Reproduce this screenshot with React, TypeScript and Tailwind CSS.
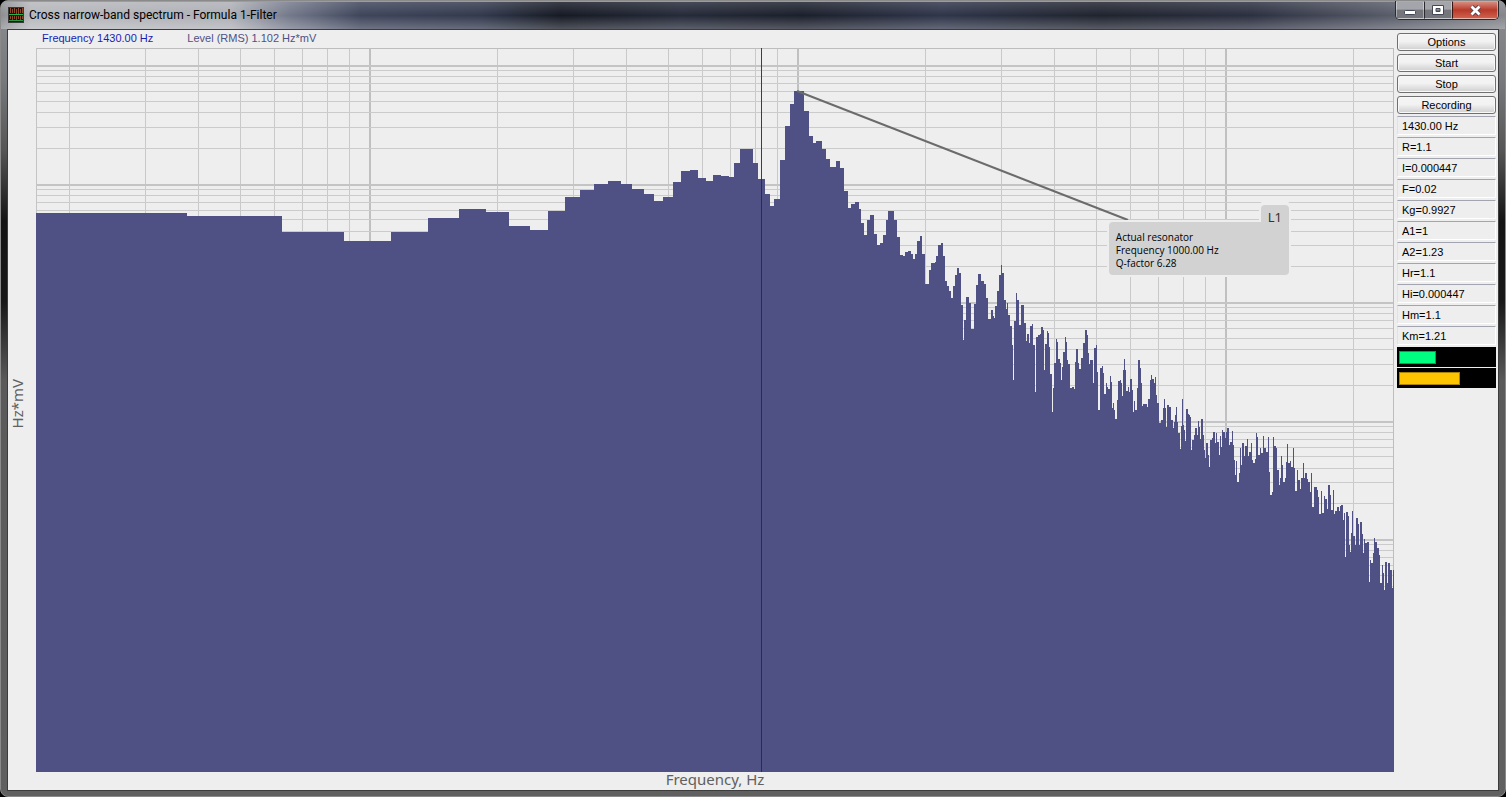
import React from "react";

const PLOT = { left: 36, top: 48, right: 1394, bottom: 772 };
const DECADE_X = 428;
const DECADE_Y = 118.5;

// start and level of every band
const bands = [
  36,213, 187,216, 282,232, 344,241, 391,232, 428,218, 459,209, 486,212, 509,226, 530,230,
  548,211, 565,197, 580,190, 594,184, 608,181, 621,184, 632,189, 644,194, 654,201, 663,197,
  673,182, 681,171, 690,170, 698,178, 706,181, 713,175, 721,176, 729,177, 734,163, 740,149,
  753,163, 758,179, 765,194, 770,206, 774,199, 780,160, 785,126, 790,104, 794,91, 804,111,
  809,136, 813,143, 816,141, 822,149, 826,159, 830,167, 836,161, 840,168, 844,191, 848,208,
  851,204, 855,202, 859,209, 861,223, 864,235, 867,220, 870,215, 874,234, 877,245, 880,243,
  883,235, 886,220, 888,211, 894,220, 897,237, 900,255, 903,256, 905,252, 908,251, 911,254,
  913,259, 915,254, 917,241, 920,236, 922,254, 925,284, 929,270, 931,263, 935,262, 936,256,
  938,245, 941,243, 943,256, 945,281, 947,286, 949,291, 951,298, 953,286, 955,275, 957,268,
  959,273, 961,305, 963,340, 964,320, 966,297, 969,303, 971,329, 974,304, 976,285, 978,274,
  981,281, 984,284, 986,298, 988,319, 991,310, 993,316, 994,318, 995,306, 997,291, 999,275,
  1001,265, 1002,273, 1004,300, 1006,309, 1007,303, 1008,315, 1010,326, 1012,345, 1013,380,
  1014,321, 1016,293, 1017,300, 1019,325, 1021,305, 1024,323, 1026,341, 1027,334, 1029,343,
  1030,326, 1032,324, 1033,345, 1035,392, 1036,337, 1038,335, 1040,334, 1041,327, 1043,330,
  1044,370, 1045,344, 1047,331, 1048,333, 1049,347, 1050,374, 1052,412, 1053,388, 1054,363,
  1056,339, 1057,342, 1058,359, 1060,363, 1061,380, 1062,367, 1063,352, 1065,337, 1066,342,
  1067,360, 1068,364, 1070,388, 1072,387, 1074,389, 1075,362, 1076,349, 1078,363, 1079,369,
  1081,358, 1083,343, 1085,330, 1087,335, 1088,353, 1089,364, 1090,360, 1093,383, 1094,348,
  1096,345, 1097,372, 1098,410, 1100,368, 1102,366, 1103,373, 1104,394, 1106,383, 1107,387,
  1108,389, 1110,376, 1111,382, 1112,408, 1113,403, 1114,410, 1115,419, 1117,400, 1118,381,
  1120,380, 1121,383, 1122,396, 1123,370, 1124,359, 1125,370, 1126,391, 1128,387, 1129,392,
  1130,379, 1132,390, 1133,412, 1134,401, 1135,410, 1137,388, 1138,360, 1140,368, 1141,383,
  1142,406, 1143,404, 1147,407, 1148,399, 1150,380, 1151,375, 1152,379, 1154,383, 1155,377,
  1156,395, 1157,403, 1159,423, 1161,420, 1163,408, 1164,399, 1165,408, 1166,427, 1167,405,
  1169,407, 1171,420, 1173,428, 1174,422, 1175,415, 1176,407, 1177,422, 1178,433, 1180,449,
  1181,426, 1182,399, 1183,425, 1184,430, 1185,441, 1186,409, 1188,414, 1189,415, 1190,417,
  1191,450, 1192,440, 1194,435, 1195,428, 1197,435, 1198,421, 1199,427, 1200,439, 1201,419,
  1203,435, 1204,450, 1205,458, 1206,443, 1208,455, 1209,467, 1210,440, 1212,438, 1213,432,
  1215,443, 1216,433, 1217,442, 1219,455, 1220,436, 1221,447, 1222,430, 1223,432, 1225,438,
  1226,432, 1227,428, 1229,445, 1230,442, 1232,431, 1233,445, 1234,460, 1235,475, 1236,461,
  1237,482, 1239,473, 1240,448, 1241,465, 1242,443, 1244,456, 1245,446, 1247,439, 1248,456,
  1249,452, 1251,443, 1252,460, 1253,463, 1255,459, 1256,433, 1257,437, 1258,455, 1260,448,
  1261,453, 1263,436, 1264,448, 1266,452, 1268,437, 1269,472, 1270,495, 1272,492, 1273,437,
  1274,446, 1276,448, 1277,470, 1279,485, 1280,478, 1281,456, 1282,465, 1283,482, 1285,478,
  1286,462, 1287,444, 1288,463, 1290,461, 1291,467, 1293,448, 1294,468, 1295,491, 1297,470,
  1298,480, 1300,489, 1301,478, 1303,463, 1304,478, 1305,473, 1307,479, 1308,482, 1310,492,
  1311,473, 1312,507, 1314,487, 1317,490, 1318,497, 1319,514, 1321,491, 1322,513, 1324,496,
  1325,499, 1327,509, 1328,485, 1330,495, 1331,510, 1333,490, 1334,514, 1335,511, 1337,507,
  1339,511, 1340,506, 1341,505, 1343,520, 1344,513, 1345,557, 1346,512, 1348,516, 1349,545,
  1350,552, 1351,533, 1352,511, 1353,536, 1355,545, 1356,518, 1358,524, 1359,545, 1360,522,
  1362,534, 1363,553, 1364,539, 1365,543, 1367,542, 1369,582, 1370,560, 1371,563, 1373,553,
  1374,538, 1375,542, 1377,548, 1379,555, 1380,583, 1382,565, 1383,573, 1384,590, 1385,562,
  1387,583, 1388,563, 1390,570, 1392,588, 1393,570,
];

const buttons = ["Options", "Start", "Stop", "Recording"];

const readouts = [
  "1430.00 Hz",
  "R=1.1",
  "I=0.000447",
  "F=0.02",
  "Kg=0.9927",
  "A1=1",
  "A2=1.23",
  "Hr=1.1",
  "Hi=0.000447",
  "Hm=1.1",
  "Km=1.21",
];

const meters = [
  { name: "Channel 1", width: "39%", className: "bg-[#00ff80] border-[#00a050]" },
  { name: "Channel 2", width: "64%", className: "bg-[#ffc400] border-[#a88200]" },
];

function spectrumPath() {
  let d = `M${PLOT.left} ${PLOT.bottom}`;
  for (let i = 0; i < bands.length; i += 2) {
    d += `H${bands[i]}V${bands[i + 1]}`;
  }
  return d + `H${PLOT.right}V${PLOT.bottom}Z`;
}

// log grid: a heavier line on each decade, light ones for 2..9
function gridLines() {
  const vertical: { at: number; major: boolean }[] = [];
  const horizontal: { at: number; major: boolean }[] = [];
  for (let decade = -1; decade < 3; decade++) {
    for (let k = 1; k < 10; k++) {
      const at = 368.6 + DECADE_X * (decade + Math.log10(k));
      if (at > PLOT.left && at < PLOT.right) vertical.push({ at: Math.round(at), major: k === 1 });
    }
  }
  for (let decade = 0; decade < 6; decade++) {
    for (let k = 1; k < 10; k++) {
      const at = 65 + DECADE_Y * (decade - Math.log10(k));
      if (at > PLOT.top) horizontal.push({ at: Math.round(at), major: k === 1 });
    }
  }
  return { vertical, horizontal };
}

function Spectrum() {
  const { vertical, horizontal } = gridLines();
  return (
    <svg
      className="absolute inset-0 h-full w-full"
      viewBox="36 48 1358 724"
      preserveAspectRatio="none"
      role="img"
      aria-label="Cross narrow-band spectrum"
    >
      <g shapeRendering="crispEdges">
        {vertical.map((l) => (
          <rect key={l.at} x={l.at} y={PLOT.top} width={l.major ? 2 : 1} height={724} fill={l.major ? "#c0c0c0" : "#c9c9c9"} />
        ))}
        {horizontal.map((l) => (
          <rect key={l.at} x={PLOT.left} y={l.at} width={1358} height={l.major ? 2 : 1} fill={l.major ? "#c4c4c4" : "#cbcbcb"} />
        ))}
        <rect x={36} y={48} width={1358} height={1} fill="#bdbdbd" />
        <rect x={36} y={48} width={1} height={724} fill="#c4c4c4" />
        <rect x={1393} y={48} width={1} height={724} fill="#bdbdbd" />
        <path d={spectrumPath()} fill="#4f5084" />
        <rect x={761} y={48} width={1} height={131} fill="#2a2ad0" />
        <rect x={761} y={179} width={1} height={593} fill="#1c1cc0" />
      </g>
      <path d="M797 91L1128 220" stroke="#6b6b6b" strokeWidth={2} fill="none" />
    </svg>
  );
}

function Callout() {
  return (
    <div className="absolute left-[79%] top-[21.7%] flex w-[180px] flex-col items-end text-black">
      <div className="relative flex h-[17px] w-7 items-start justify-center rounded-t-sm bg-[#d2d2d2] font-['Noto_Sans',sans-serif] text-[13px] leading-6 text-[#333] shadow-[0_-2px_0_2px_#eee]">
        L1
      </div>
      <div className="w-full rounded-sm rounded-tr-none bg-[#d2d2d2] px-[7px] pt-[9px] pb-[5px] font-['Open_Sans',sans-serif] text-[10px] leading-[13px] shadow-[0_0_0_2px_#eee]">
        <p>Actual resonator</p>
        <p>Frequency 1000.00 Hz</p>
        <p>Q-factor 6.28</p>
      </div>
    </div>
  );
}

function AppIcon() {
  return (
    <svg className="h-4 w-4 shrink-0" viewBox="0 0 16 16" aria-hidden="true">
      <rect width="16" height="16" fill="#1a1210" />
      <path
        d="M2.5 1v5M4.5 2v4M6.5 1v5M8.5 2v5M10.5 1v6M12.5 2v4M14.5 1v5M2.5 9v3M4.5 9v5M6.5 9v3M8.5 9v4M10.5 9v3M12.5 9v5M14.5 9v3"
        stroke="#8c4a2c"
      />
      <path d="M0 7.500h16" stroke="#18b850" />
      <path d="M1 13.500h14" stroke="#1d9a45" />
      <rect x=".5" y=".5" width="15" height="15" fill="none" stroke="#3a3a3a" />
    </svg>
  );
}

function TitleBar() {
  return (
    <header className="relative flex h-7 items-start justify-between rounded-t-md bg-[linear-gradient(90deg,#8d8e92_0,#b7b8bc_30px,#aeb0b6_230px,#73788a_290px,#3f465b_360px,#333a4d_480px,#161a24_560px,#262b3a_680px,#1c202c_800px,#30364a_940px,#20242f_1100px,#2c3040_1250px,#555966_1380px,#85878c_100%)] pl-[7px]">
      <div className="pointer-events-none absolute inset-0 rounded-t-md border-t border-[#9a9ca2] bg-linear-to-b from-white/15 via-transparent to-white/25" />
      <div className="relative flex items-center gap-[5px] pt-[6px]">
        <AppIcon />
        <h1 className="whitespace-nowrap font-['Roboto',sans-serif] text-[12px] leading-4 text-black">
          Cross narrow-band spectrum - Formula 1-Filter
        </h1>
      </div>
      <div className="relative mr-[6px] flex h-[19px] overflow-hidden rounded-b-[5px] border border-t-0 border-[#2a2a2e]">
        <button aria-label="Minimize" className="flex w-7 items-end justify-center border border-white/40 bg-linear-to-b from-[#a4a5aa] from-45% to-[#74767c] to-50% pb-[3px]">
          <svg className="h-[5px] w-3" viewBox="0 0 12 5">
            <rect x=".5" y=".5" width="11" height="4" rx="1" fill="#fff" stroke="#444855" />
          </svg>
        </button>
        <button aria-label="Maximize" className="flex w-7 items-center justify-center border border-l-[#2a2a2e] border-white/40 bg-linear-to-b from-[#a4a5aa] from-45% to-[#74767c] to-50%">
          <svg className="h-[10px] w-3" viewBox="0 0 12 10">
            <path d="M.5.5h11v9H.5zM4 3.500h4v3H4z" fill="#fff" fillRule="evenodd" stroke="#444855" />
          </svg>
        </button>
        <button aria-label="Close" className="flex w-[46px] items-center justify-center border border-l-[#3a1612] border-white/40 bg-linear-to-b from-[#d58a7e] from-0% via-[#b8392a] via-50% to-[#d0604c]">
          <svg className="h-[11px] w-[13px]" viewBox="0 0 13 11">
            <path d="M2.500 1.500l8 8M10.500 1.500l-8 8" stroke="#5a3a40" strokeWidth="4.500" />
            <path d="M2.500 1.500l8 8M10.500 1.500l-8 8" stroke="#fff" strokeWidth="2.800" />
          </svg>
        </button>
      </div>
    </header>
  );
}

function SidePanel() {
  return (
    <aside className="mt-[3px] mr-[2px] flex w-[99px] shrink-0 flex-col gap-[2px] font-['Liberation_Sans',Arial,sans-serif] text-[11px] text-black">
      <div className="flex flex-col gap-[3px]">
        {buttons.map((label) => (
          <button
            key={label}
            className="h-[18px] rounded-[3px] border border-[#707070] bg-linear-to-b from-[#f3f3f3] from-45% to-[#cfcfcf] leading-4 shadow-[inset_0_0_0_1px_#f8f8f8]"
          >
            {label}
          </button>
        ))}
      </div>
      {readouts.map((text, i) => (
        <div key={i} className="h-[19px] border border-t-[#a2a4b0] border-r-white border-b-white border-l-[#e2e2e6] pl-1 leading-[19px]">
          {text}
        </div>
      ))}
      {meters.map((m) => (
        <div key={m.name} role="meter" aria-label={m.name} className="h-[19px] bg-black px-[2px] py-1 shadow-[0_1px_0_#000]">
          <div className={`h-[13px] border ${m.className}`} style={{ width: m.width }} />
        </div>
      ))}
    </aside>
  );
}

export default function App() {
  return (
    <div className="flex h-screen flex-col overflow-hidden bg-black">
      <div className="flex min-h-0 flex-1 flex-col rounded-lg border border-[#8a8a8a] bg-[linear-gradient(180deg,#8d8e92_0,#77787c_80px,#555_150px,#141414_220px,#181818_300px,#5a5a5a_380px,#606060_100%)]">
        <TitleBar />
        <main className="mx-[6px] mb-[5px] flex min-h-0 flex-1 border border-[#3c3c3c] bg-[#eee]">
          <div className="flex w-7 shrink-0 items-center justify-start pb-3">
            <span className="rotate-180 whitespace-nowrap font-['Noto_Sans',sans-serif] text-[15px] leading-[18px] text-[#606060] [writing-mode:vertical-rl]">
              Hz*mV
            </span>
          </div>
          <section className="flex min-w-0 flex-1 flex-col">
            <div className="flex h-[18px] shrink-0 gap-[34px] pl-[6px] font-['Liberation_Sans',Arial,sans-serif] text-[11px] leading-4">
              <span className="text-[#1c1cb4]">Frequency 1430.00 Hz</span>
              <span className="text-[#4f5084]">Level (RMS) 1.102 Hz*mV</span>
            </div>
            <div className="relative min-h-0 flex-1">
              <Spectrum />
              <Callout />
            </div>
            <div className="h-[18px] shrink-0 text-center font-['Noto_Sans',sans-serif] text-[15px] leading-[14px] text-[#606060]">
              Frequency, Hz
            </div>
          </section>
          <div className="w-[3px] shrink-0" />
          <SidePanel />
        </main>
      </div>
    </div>
  );
}
